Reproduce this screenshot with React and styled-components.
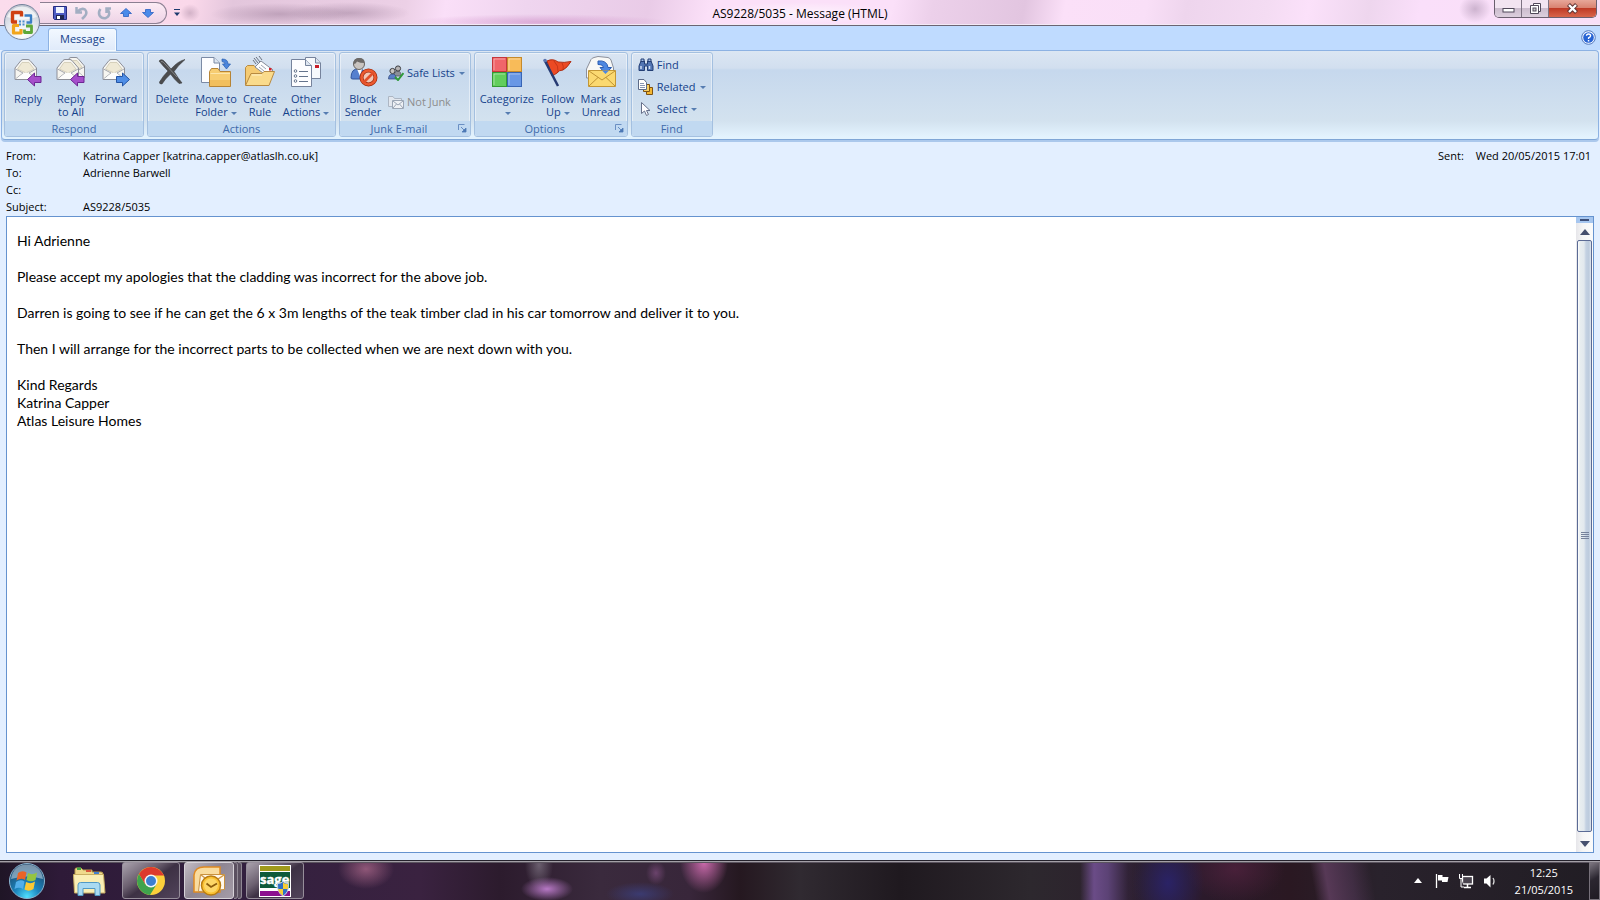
import React from 'react'
import styled, { createGlobalStyle, css } from 'styled-components'

const UI_FONT = `'Open Sans', 'Noto Sans', sans-serif`

const GlobalStyle = createGlobalStyle`
  * {
    box-sizing: border-box;
  }

  body {
    margin: 0;
    overflow: hidden;
    font-family: ${UI_FONT};
    font-size: 11px;
    color: #000;
  }

  button {
    font: inherit;
    color: inherit;
    background: none;
    border: 0;
    padding: 0;
    cursor: pointer;
  }

  svg {
    display: block;
    flex: none;
  }
`

const Desktop = styled.div`
  display: flex;
  flex-direction: column;
  height: 100vh;
  background: #e3efff;
`

/* ---------- title bar ---------- */

const TitleBar = styled.header`
  position: relative;
  display: grid;
  grid-template-columns: 1fr auto 1fr;
  align-items: center;
  height: 26px;
  border-bottom: 1px solid #6b6472;
  box-shadow: inset 0 -1px 0 #f3e9f6;
  background:
    radial-gradient(ellipse 70px 11px at 280px 14px, rgba(120, 90, 120, 0.35), transparent),
    radial-gradient(ellipse 60px 11px at 350px 13px, rgba(120, 90, 120, 0.35), transparent),
    radial-gradient(ellipse 10px 9px at 190px 13px, rgba(120, 90, 120, 0.3), transparent),
    radial-gradient(ellipse 130px 8px at 540px 22px, rgba(190, 110, 180, 0.4), transparent),
    radial-gradient(ellipse 16px 14px at 1475px 9px, rgba(150, 125, 155, 0.45), transparent),
    linear-gradient(100deg, #fbdcec 0, #fad8ea 190px, #e3c6dc 230px, #ecd0e6 400px,
      #fadff8 440px, #efd5ef 520px, #e9cbe7 640px, #fbe0f8 700px, #fbe0f9 880px,
      #ecd0ea 920px, #e2c5e0 1010px, #fbe0f8 1050px, #f9dff7 1130px,
      #eed5ed 1170px, #f4dcf3 1250px, #fbe1fa 1290px, #eed6ee 1350px, #fadffa 1400px, #f8dff7 100%);
`

const QuickAccess = styled.div`
  display: flex;
  align-items: center;
  height: 22px;
  margin: 0 0 0 40px;
`

const QuickPill = styled.div`
  display: flex;
  align-items: center;
  gap: 6px;
  height: 22px;
  padding: 0 10px 0 12px;
  border: 1px solid #8b7f92;
  border-left: 0;
  border-radius: 0 11px 11px 0;
  background: linear-gradient(rgba(255, 255, 255, 0.5), rgba(225, 205, 225, 0.5));
`

const QuickMore = styled.button`
  margin-left: 6px;
`

const OfficeButton = styled.button`
  position: absolute;
  left: 3px;
  top: 2px;
  z-index: 2;
`

const WindowTitle = styled.h1`
  margin: 0;
  padding: 2px 8px 0;
  font-size: 12px;
  font-weight: 400;
  line-height: 20px;
  background: radial-gradient(ellipse closest-side, rgba(255, 255, 255, 0.6), transparent);
`

const WindowButtons = styled.div`
  justify-self: end;
  align-self: start;
  display: flex;
  margin-right: 3px;
  border: 1px solid #6a5f6e;
  border-top: 0;
  border-radius: 0 0 5px 5px;
  overflow: hidden;
`

const WindowButton = styled.button`
  display: grid;
  place-items: center;
  width: ${({ $close }) => ($close ? 47 : 27)}px;
  height: 17px;
  border-right: 1px solid #7d7282;
  background: linear-gradient(#f2e4f1 0 45%, #cbbccd 50%, #dccfdd);

  ${({ $close }) =>
    $close &&
    css`
      border-right: 0;
      background: linear-gradient(#e7a799 0, #d98371 45%, #bf3b26 50%, #d8654b);
    `}
`

/* ---------- ribbon ---------- */

const TabStrip = styled.nav`
  display: flex;
  justify-content: space-between;
  align-items: flex-end;
  height: 24px;
  padding: 0 4px 0 48px;
  background: #bfdbff;
`

const Tab = styled.button`
  height: 23px;
  padding: 0 11px 3px;
  position: relative;
  z-index: 1;
  margin-bottom: -1px;
  border: 1px solid #8db2e3;
  border-bottom: 0;
  border-radius: 3px 3px 0 0;
  background: linear-gradient(#f2f8ff, #dfeafa);
  box-shadow: inset 0 0 0 1px #f4fbff;
  color: #15428b;
`

const HelpButton = styled.button`
  align-self: center;
  padding-bottom: 2px;
`

const Ribbon = styled.section`
  display: flex;
  gap: 3px;
  height: 90px;
  margin: 0 1px;
  padding: 1px 2px 2px;
  border: 1px solid #8db2e3;
  border-bottom-color: #7fa6d6;
  border-radius: 4px;
  box-shadow: 0 2px 0 #abc8ec;
  background: linear-gradient(#dbe6f3 0, #d2dfef 17px, #c6d8ed 19px, #d3e2ef 70px, #e3f3fe 86px);
`

const Group = styled.div`
  display: flex;
  flex-direction: column;
  border: 1px solid #a4c0e0;
  border-radius: 3px;
  box-shadow: inset 0 0 0 1px rgba(255, 255, 255, 0.45);
  overflow: hidden;
`

const GroupItems = styled.div`
  flex: 1;
  display: flex;
  align-items: stretch;
  padding: 0 ${({ $end }) => $end}px 0 2px;
`

const GroupName = styled.div`
  display: flex;
  align-items: center;
  height: 15px;
  padding-right: ${({ $launcher }) => ($launcher ? 3 : 0)}px;
  background: #c1d9f1;
  color: #3e6aaa;
  line-height: 15px;
  text-align: center;

  span {
    flex: 1;
  }
`

const BigButton = styled.button`
  display: flex;
  flex-direction: column;
  align-items: center;
  min-width: ${({ $width }) => $width}px;
  padding-top: 3px;
  color: #15428b;
  line-height: 13px;
  text-align: center;
  white-space: nowrap;

  > svg {
    margin-bottom: 4px;
  }
`

const SmallButtons = styled.div`
  display: flex;
  flex-direction: column;
  gap: ${({ $gap }) => $gap}px;
  padding: ${({ $top }) => $top}px 2px 0 4px;
`

const SmallButton = styled.button`
  display: flex;
  align-items: center;
  gap: 3px;
  height: 16px;
  color: #15428b;
  line-height: 16px;
  white-space: nowrap;

  &:disabled {
    color: #8d8d8d;
  }

  i {
    margin-left: 1px;
  }
`

const Caret = styled.i`
  display: inline-block;
  margin-left: 3px;
  vertical-align: middle;
  border: 3px solid transparent;
  border-top-color: #567db1;
  border-bottom: 0;
`

/* ---------- message ---------- */

const Message = styled.main`
  flex: 1;
  min-height: 0;
  display: flex;
  flex-direction: column;
  padding: 7px 6px;
`

const MessageHead = styled.div`
  display: flex;
  justify-content: space-between;
  padding: 0 3px 1px 0;
`

const Fields = styled.dl`
  display: grid;
  grid-template-columns: 77px auto;
  grid-auto-rows: 17px;
  margin: 0;
  line-height: 17px;

  dd {
    margin: 0;
  }
`

const Sent = styled(Fields)`
  grid-template-columns: auto auto;
  column-gap: 12px;
`

const Sheet = styled.div`
  flex: 1;
  min-height: 0;
  display: flex;
  border: 1px solid #6593cf;
  background: #fff;
`

const MessageText = styled.article`
  flex: 1;
  padding: 15px 10px;
  font-family: Lato, 'Open Sans', sans-serif;
  font-size: 14px;
  font-variant-ligatures: none;
  line-height: 18px;

  p {
    margin: 0 0 18px;
  }
`

const Scrollbar = styled.div`
  display: flex;
  flex-direction: column;
  width: 17px;
  background: linear-gradient(90deg, #e6e6ea, #f6f6f6 40%, #fbfbfb);
`

const SplitHandle = styled.div`
  height: 6px;
  padding: 2px 4px;
  background: #a6c6ef;

  &::before {
    content: '';
    display: block;
    height: 2px;
    background: #3d4f78;
  }
`

const ScrollArrow = styled.button`
  display: grid;
  place-items: center;
  height: ${({ $down }) => ($down ? 20 : 17)}px;
  padding-top: ${({ $down }) => ($down ? 3 : 0)}px;
`

const Thumb = styled.div`
  flex: 1;
  display: grid;
  place-items: center;
  margin: 0 1px;
  border: 1px solid #5b6b95;
  border-radius: 2px;
  background: linear-gradient(90deg, #fff 0, #e8eef0 2px, #e2e9ee 6px, #c3d1e2 8px, #bccbdd 11px, #dfe8f2);
`

/* ---------- taskbar ---------- */

const Taskbar = styled.footer`
  display: flex;
  height: 40px;
  border-top: 1px solid #25222c;
  box-shadow: inset 0 1px 0 #a39fa6, inset 0 2px 0 #5a535e;
  color: #fff;
  background:
    radial-gradient(ellipse 28px 20px at 366px 8px, rgba(190, 115, 150, 0.65), transparent),
    radial-gradient(ellipse 26px 12px at 547px 28px, rgba(190, 125, 205, 0.95), transparent),
    radial-gradient(ellipse 14px 24px at 539px 4px, rgba(130, 120, 135, 0.7), transparent),
    radial-gradient(ellipse 10px 12px at 656px 12px, rgba(140, 85, 140, 0.6), transparent),
    radial-gradient(ellipse 34px 12px at 640px 33px, rgba(60, 65, 130, 0.75), transparent),
    radial-gradient(ellipse 24px 30px at 704px 2px, rgba(200, 105, 170, 1), transparent),
    linear-gradient(90deg, transparent 1080px, rgba(110, 78, 140, 0.95) 1094px,
      rgba(100, 72, 130, 0.85) 1108px, rgba(60, 40, 80, 0.3) 1128px, transparent 1140px),
    radial-gradient(ellipse 36px 50px at 1168px 22px, rgba(42, 35, 105, 0.95), transparent),
    radial-gradient(ellipse 50px 34px at 1235px 8px, rgba(85, 35, 65, 0.7), transparent),
    linear-gradient(80deg, transparent 1296px, rgba(95, 62, 95, 0.85) 1310px,
      rgba(80, 55, 85, 0.6) 1335px, transparent 1355px),
    linear-gradient(90deg, #1f1526 0, #2e1a38 60px, #33203f 240px, #3a2240 420px, #2c1b2d 500px,
      #3a2a3d 600px, #38263a 690px, #251820 740px, #302a31 800px, #1f191f 900px,
      #2d282e 1030px, #2b1a2b 1200px, #2a1822 1290px, #29222c 1380px, #211d24 100%);
`

const TaskButtons = styled.div`
  display: flex;
  flex: 1;
  align-items: stretch;
  padding-left: 8px;
`

const StartButton = styled.button`
  width: 38px;
  align-self: center;
`

const PinButton = styled.button`
  display: grid;
  place-items: center;
  width: 60px;
  margin: 1px 3px 0 13px;
`

const AppButton = styled.button`
  display: grid;
  place-items: center;
  width: ${({ $active }) => ($active ? 50 : 58)}px;
  margin: 1px ${({ $active }) => ($active ? 0 : 4)}px 1px 0;
  border: 1px solid ${({ $active }) => ($active ? '#d6d2d8' : '#968e9a')};
  border-radius: 3px;
  background: ${({ $active }) =>
    $active
      ? 'linear-gradient(135deg, #c3bcc4, #8e8592 45%, #a59ca8)'
      : 'linear-gradient(145deg, #aaa2ad 0, #6c6070 35%, #3d3144 52%, #51435a)'};
`

const StackEdge = styled.span`
  width: 4px;
  margin: 1px 0;
  border: 1px solid #8f8793;
  border-left: 0;
  border-radius: 0 3px 3px 0;
  background: #5b5060;

  & + button {
    margin-left: 4px;
  }
`

const Tray = styled.div`
  display: flex;
  align-items: center;
`

const TrayIcons = styled.div`
  display: flex;
  align-items: center;
  gap: 8px;
  margin-right: 17px;
`

const HiddenIconsButton = styled.button`
  padding-right: 4px;
`

const Clock = styled.time`
  display: block;
  margin-right: 16px;
  line-height: 17px;
  text-align: center;
`

const ShowDesktop = styled.button`
  align-self: stretch;
  width: 11px;
  margin-top: 1px;
  border: 1px solid #77717a;
  background: linear-gradient(150deg, #7c7680, #2b2630 45%, #1f1b23);
`

/* ---------- drawings ---------- */

const EnvelopeShape = () => (
  <>
    <path d="M2 12 8 4.500Q9 3.500 10 3.500H15Q16 3.500 17 4.500L23.500 12V23.500H2Z" fill="#f6f5f0" stroke="#8d8f98" />
    <path d="M4.500 13 9 6.500H16L21 13 13 17Z" fill="#efe9d5" stroke="#d6d0bb" />
    <path d="M2.500 13 10 17M23 13 16 17M2.500 23 10 17M23 23 16 17" fill="none" stroke="#a7a9ae" />
    <path d="M3 23 10 17.500 13 16.500 16 17.500 22.500 23Z" fill="#fdfdfc" />
  </>
)

const LeftArrow = () => (
  <path d="M14.500 23.500 21.500 17V20.500H28V26.500H21.500V30Z" fill="#a64fcb" stroke="#6d2793" />
)

const ReplyIcon = () => (
  <svg width="30" height="32" viewBox="0 0 30 32">
    <EnvelopeShape />
    <LeftArrow />
  </svg>
)

const ReplyAllIcon = () => (
  <svg width="30" height="32" viewBox="0 0 30 32">
    <g transform="translate(5 -2)">
      <EnvelopeShape />
    </g>
    <g transform="translate(-1 0)">
      <EnvelopeShape />
    </g>
    <LeftArrow />
  </svg>
)

const ForwardIcon = () => (
  <svg width="30" height="32" viewBox="0 0 30 32">
    <EnvelopeShape />
    <path d="M28.500 23.500 21.500 17V20.500H15.500V26.500H21.500V30Z" fill="#4f8ee6" stroke="#2354a5" />
  </svg>
)

const DeleteIcon = () => (
  <svg width="32" height="32" viewBox="0 0 32 32">
    <path d="M3 5Q6 2 9 6L15 13Q22 5 29 3.500Q22 9.500 18 15.500Q22 22 26 27L23 27.500Q18 23 14.500 18Q9 23 6 28Q3 28 3.500 26Q7 20 12 15Q7 10 3 5Z" fill="#4b4c4e" stroke="#3b3c3e" strokeWidth=".6" />
    <path d="M5 5.500Q7 5 9 8L15 14.500 21 21" stroke="#858789" fill="none" />
  </svg>
)

const MoveIcon = () => (
  <svg width="32" height="32" viewBox="0 0 32 32">
    <path d="M1.500 1.500H14L19.500 7V26.500H1.500Z" fill="#fdfdff" stroke="#7b8aa5" />
    <path d="M14 1.500V7H19.500" fill="#dde5f0" stroke="#7b8aa5" />
    <path d="M22 3Q28 3 28 8H30.500L26.500 13 22.500 8H25Q25 6 22 5.500Z" fill="#4c86dc" stroke="#275cae" strokeWidth=".7" />
    <path d="M9.500 30.500V15.500L11.500 12.500H18L20 15.500H30.500V30.500Z" fill="#f7cd72" stroke="#b68436" />
    <path d="M10.500 17.500H30" stroke="#fde6ab" />
    <path d="M10 30V24H30V30Z" fill="#eeb650" opacity=".6" />
  </svg>
)

const RuleIcon = () => (
  <svg width="32" height="32" viewBox="0 0 32 32">
    <path d="M1.500 29V11.500L3.500 9.500H10L12 11.500H24.500V18" fill="#f5cb73" stroke="#b88a40" />
    <path d="M17 5 29 14 23 20 11 11Z" fill="#fdfdfd" stroke="#858b98" />
    <path d="M9 4 12 8M12 1 16 6M15 0 18 4M10 2 14 7" stroke="#6b7280" />
    <path d="M17 9 22 13M15 11 20 15" stroke="#9aa3b4" />
    <rect x="25" y="12" width="2.500" height="2.500" fill="#d4202a" />
    <path d="M1.500 29.500 7 17.500H18L20 15.500H30.500L25 29.500Z" fill="#fadb8c" stroke="#b88a40" />
    <path d="M8 19H18" stroke="#fff1c8" />
  </svg>
)

const OtherIcon = () => (
  <svg width="32" height="32" viewBox="0 0 32 32">
    <path d="M15.500 1.500H25.500L30.500 7V22.500H15.500Z" fill="#f7f9fc" stroke="#76839c" />
    <path d="M25.500 1.500V7H30.500" fill="#dce3ee" stroke="#76839c" />
    <rect x="25" y="9" width="4" height="3" fill="#c81e28" />
    <path d="M1.500 3.500H15.500L21.500 9.500V30.500H1.500Z" fill="#fdfdff" stroke="#76839c" />
    <path d="M15.500 3.500V9.500H21.500" fill="#dde5f0" stroke="#76839c" />
    <g fill="#fff" stroke="#65748d">
      <circle cx="5.500" cy="15" r="1.300" />
      <circle cx="5.500" cy="20" r="1.300" />
      <circle cx="5.500" cy="25" r="1.300" />
      <path d="M9 15.500H18M9 20.500H18M9 25.500H18" />
    </g>
  </svg>
)

const BlockIcon = () => (
  <svg width="30" height="32" viewBox="0 0 30 32">
    <path d="M3 22Q3 12 11 13Q17 13 18 20V23H5Q3 23 3 22Z" fill="#5680cf" stroke="#31549b" />
    <path d="M9 13 12 20 14 13Z" fill="#fff" />
    <circle cx="11" cy="8" r="5.500" fill="#c9c4c0" stroke="#66625f" />
    <path d="M5.500 8Q5 2 11 2Q17 2 16.500 7Q12 7 9 5.500Q8 8 5.500 8Z" fill="#6d6a68" />
    <circle cx="20.500" cy="21.500" r="7" fill="#f2c6b5" stroke="#9e2a0c" strokeWidth="4" />
    <circle cx="20.500" cy="21.500" r="7" fill="none" stroke="#ec5a30" strokeWidth="2.600" />
    <path d="M15.500 26.500 25.500 16.500" stroke="#e2502a" strokeWidth="2.600" />
  </svg>
)

const SafeIcon = () => (
  <svg width="16" height="16" viewBox="0 0 16 16">
    <path d="M6 11Q6 6 10 6Q13 6 13 11Z" fill="#8c9099" stroke="#4c4f58" strokeWidth=".7" />
    <circle cx="10" cy="3.500" r="2.600" fill="#b5b3b4" stroke="#3e3f43" />
    <path d="M.5 14Q.5 9 5 9Q8 9 8 14Z" fill="#5a7fc8" stroke="#30477a" strokeWidth=".7" />
    <circle cx="4.500" cy="6" r="2.600" fill="#c8c4c2" stroke="#3e3f43" />
    <path d="M7 12 10 15 15.500 8" fill="none" stroke="#2f9a3a" strokeWidth="2" />
  </svg>
)

const NotJunkIcon = () => (
  <svg width="16" height="16" viewBox="0 0 16 16">
    <path d="M.5 12.500V2.500H5L6.500 4.500H13.500V12.500Z" fill="#e2e7ee" stroke="#adb6c3" />
    <path d="M4.500 6.500H15.500V14.500H4.500Z" fill="#eef1f5" stroke="#9ba6b5" />
    <path d="M5 7 10 11 15 7M5 14 8.500 10M15 14 11.500 10" fill="none" stroke="#9ba6b5" />
  </svg>
)

const CategorizeIcon = () => (
  <svg width="32" height="32" viewBox="0 0 32 32">
    <rect x="1.500" y="1.500" width="14" height="14" fill="#f0656a" stroke="#c4373b" />
    <rect x="16.500" y="1.500" width="14" height="14" fill="#f8bb59" stroke="#c58a2c" />
    <rect x="1.500" y="16.500" width="14" height="14" fill="#62ce5c" stroke="#349a34" />
    <rect x="16.500" y="16.500" width="14" height="14" fill="#6897e5" stroke="#3865b5" />
    <path d="M3 14V3H14M18 14V3H29M3 29V18H14M18 29V18H29" fill="none" stroke="#fff" opacity=".4" />
  </svg>
)

const FlagIcon = () => (
  <svg width="32" height="32" viewBox="0 0 32 32">
    <path d="M5 5Q11 2 16 6Q22 7 29 5.500Q25 12 21 14Q17 14 15 17Q12 19 10 20Z" fill="#ec4a24" stroke="#b02c11" />
    <path d="M12 5Q17 10 16 16M20 7Q22 10 21 14" fill="none" stroke="#b62e12" opacity=".7" />
    <path d="M3 5 16 30" stroke="#263a73" strokeWidth="2.500" />
    <circle cx="3" cy="4.500" r="1.800" fill="#5f76b0" />
  </svg>
)

const UnreadIcon = () => (
  <svg width="32" height="32" viewBox="0 0 32 32">
    <path d="M1.500 13 6 3.500Q7 2 9 1.500L13 .5 23 1.500Q25 2 26 4L28.500 12V22H1.500Z" fill="#f8f8f6" stroke="#8b8f9a" />
    <path d="M13 5Q22 4 23 11.500H26.500L20.500 18 15 11.500H18.500Q18 8.500 13 8.500Z" fill="#4e88e2" stroke="#2a5cb2" />
    <path d="M3.500 14.500H30.500V30.500H3.500Z" fill="#fbd970" stroke="#c39736" />
    <path d="M4 15 17 24 30 15M4 30 13 21.500M30 30 21 21.500" fill="none" stroke="#bf9334" />
    <path d="M20.500 18 17 14.500H24Z" fill="#4e88e2" />
  </svg>
)

const BinocularsIcon = () => (
  <svg width="16" height="16" viewBox="0 0 16 16">
    <path d="M3 4 1 9V13.500H6.500V9H9.500V13.500H15V9L13 4H9.500V7H6.500V4Z" fill="#5275b3" stroke="#233e74" />
    <path d="M3 2H6V4.500H3ZM10 2H13V4.500H10Z" fill="#a8c0e8" stroke="#233e74" />
    <path d="M3 9V12M11.500 9V12" stroke="#cfdef5" strokeWidth="1.500" />
  </svg>
)

const RelatedIcon = () => (
  <svg width="16" height="16" viewBox="0 0 16 16">
    <path d="M8.500 8.500H14.500V15.500H8.500Z" fill="#f4b732" stroke="#7d5213" />
    <path d="M5.500 5.500H11.500V12.500H5.500Z" fill="#f8cf63" stroke="#7d5213" />
    <path d="M.5 .5H6L8.500 3.500V10.500H.5Z" fill="#fff" stroke="#5c6b88" />
    <path d="M2 4.500H6M2 6.500H7M2 8.500H7" stroke="#8796b3" />
  </svg>
)

const PointerIcon = () => (
  <svg width="16" height="16" viewBox="0 0 16 16">
    <path d="M3.500 1.500V12.500L6.500 10 8.500 14.500 10.500 13.500 8.500 9.500H12Z" fill="#fdfdff" stroke="#66708a" />
  </svg>
)

const OfficeLogo = () => (
  <svg width="38" height="39" viewBox="0 0 38 39">
    <defs>
      <radialGradient id="orb" cx=".5" cy=".85" r=".9">
        <stop offset="0" stopColor="#fff" />
        <stop offset=".5" stopColor="#e3e7ee" />
        <stop offset="1" stopColor="#b9bfcb" />
      </radialGradient>
    </defs>
    <circle cx="19" cy="20" r="17.500" fill="url(#orb)" stroke="#74829c" />
    <path d="M4 15Q8 5 19 4.500Q30 5 34 15Q19 20 4 15Z" fill="#fff" opacity=".65" />
    <g fill="none" strokeLinejoin="round">
      <path d="M14 20H9.500V10.500H18.500V14.500" stroke="#cf3f12" strokeWidth="3.400" />
      <path d="M16 23.500H10.500V31H18V27" stroke="#f2a51c" strokeWidth="3.200" />
      <path d="M21.500 13.500H28V20.500H23.500" stroke="#3a7ec4" strokeWidth="2.400" />
      <path d="M21.500 27.500V30.500H28.500V24H23" stroke="#5fa83a" strokeWidth="2.800" />
    </g>
    <path d="M16 19.500H22M16 22.500H22" stroke="#4a8bca" strokeWidth="2" strokeDasharray="2 1.500" />
  </svg>
)

const SaveIcon = () => (
  <svg width="16" height="16" viewBox="0 0 16 16">
    <path d="M1.500 1.500H14.500V14.500H2.500L1.500 13.500Z" fill="#4f5cc4" stroke="#252c80" />
    <rect x="4" y="2" width="8" height="6" fill="#f0f4ff" />
    <rect x="4" y="10" width="8" height="4.500" fill="#20264f" />
    <rect x="5" y="11" width="3" height="3" fill="#fff" />
  </svg>
)

const UndoIcon = ({ flip }) => (
  <svg width="16" height="16" viewBox="0 0 16 16" fill="none" stroke="#a3aec2" strokeWidth="2.500">
    {flip ? (
      <path d="M4.500 4Q2 7 3.500 10.500Q6 14 10 13Q14 11 13 7Q12.500 5 11 4M10.500 8V3.500H15" />
    ) : (
      <path d="M2.500 2V7.500H8M3 7Q7 2.500 11 4.500Q14 8 10.500 11.500L8 14" />
    )}
  </svg>
)

const StepIcon = ({ down }) => (
  <svg width="16" height="16" viewBox="0 0 16 16">
    <path
      d={down ? 'M8 12.500 2.500 7.500H5.500V4.500H10.500V7.500H13.500Z' : 'M8 3.500 13.500 8.500H10.500V11.500H5.500V8.500H2.500Z'}
      fill="#4a8bea"
      stroke="#2a5fc2"
      strokeWidth=".8"
      strokeLinejoin="round"
    />
  </svg>
)

const MoreIcon = () => (
  <svg width="8" height="10" viewBox="0 0 8 10">
    <path d="M1 1.500H7" stroke="#1d3a6e" />
    <path d="M1 4.500H7L4 8Z" fill="#1d3a6e" />
  </svg>
)

const HelpIcon = () => (
  <svg width="15" height="15" viewBox="0 0 15 15">
    <circle cx="7.500" cy="7.500" r="6.800" fill="#eef4ff" stroke="#5379bd" />
    <circle cx="7.500" cy="7.500" r="5.300" fill="#2763d4" />
    <path d="M5.500 5.800Q5.500 4 7.500 4Q9.600 4 9.600 5.800Q9.600 7 7.600 7.800V9" fill="none" stroke="#fff" strokeWidth="1.400" />
    <rect x="6.800" y="10" width="1.500" height="1.500" fill="#fff" />
  </svg>
)

const LauncherIcon = () => (
  <svg width="9" height="9" viewBox="0 0 9 9">
    <path d="M.5 6V.5H6.500" fill="none" stroke="#6a8fc3" />
    <path d="M3 3 6 6M8 4V8H4Z" fill="#4d78b5" stroke="#4d78b5" strokeWidth=".8" />
  </svg>
)

const MinimizeIcon = () => (
  <svg width="13" height="11" viewBox="0 0 13 11">
    <rect x="1" y="5.500" width="11" height="3.500" fill="#fff" stroke="#51495a" />
  </svg>
)

const RestoreIcon = () => (
  <svg width="13" height="13" viewBox="0 0 13 13">
    <path d="M4.500 1.500H11.500V9.500H4.500Z" fill="#fff" stroke="#51495a" />
    <path d="M1.500 3.500H9.500V11.500H1.500Z" fill="#fff" stroke="#51495a" />
    <rect x="4" y="6" width="3" height="3" fill="#ccc" stroke="#51495a" />
  </svg>
)

const CloseIcon = () => (
  <svg width="13" height="11" viewBox="0 0 13 11">
    <path d="M2.500 1.500 10.500 9.500M10.500 1.500 2.500 9.500" stroke="#5c3030" strokeWidth="4.200" />
    <path d="M3 2 10 9M10 2 3 9" stroke="#fff" strokeWidth="2.400" />
  </svg>
)

const ArrowGlyph = ({ down }) => (
  <svg width="10" height="6" viewBox="0 0 10 6">
    <path d={down ? 'M0 0H10L5 6Z' : 'M0 6H10L5 0Z'} fill="#46506e" />
  </svg>
)

const Grip = () => (
  <svg width="8" height="8" viewBox="0 0 8 8">
    <path d="M0 .5H8M0 2.500H8M0 4.500H8M0 6.500H8" stroke="#76839c" />
  </svg>
)

const StartOrb = () => (
  <svg width="38" height="38" viewBox="0 0 38 38">
    <defs>
      <radialGradient id="start" cx=".5" cy=".95" r=".9">
        <stop offset="0" stopColor="#4fe0ff" />
        <stop offset=".4" stopColor="#1c84bd" />
        <stop offset="1" stopColor="#1c4266" />
      </radialGradient>
    </defs>
    <circle cx="19" cy="19" r="17.500" fill="url(#start)" stroke="#8cb4cf" />
    <path d="M3 17Q5 3 19 2.500Q33 3 35 17Q19 12 3 17Z" fill="#d6e6f0" opacity=".5" />
    <path d="M10 11Q14 8 18.500 10.500L17 18Q13 15.500 8.500 18.500Z" fill="#ea6427" />
    <path d="M20 11Q24 13.500 29 10.500L27.500 18Q23 20.500 18.500 18Z" fill="#95c440" />
    <path d="M8 20Q12.500 17 16.500 19.500L15 27Q11 24.500 6.500 27Z" fill="#52aeea" />
    <path d="M18 20Q22.500 22.500 27 19.500L25.500 27Q21 30 16.500 27.500Z" fill="#fcc833" />
  </svg>
)

const ExplorerIcon = () => (
  <svg width="34" height="32" viewBox="0 0 34 32">
    <path d="M3 27V4.500Q3 3 4.500 3H9L11 5H20V7H29Q31 7 31 9V27Z" fill="#efd98c" stroke="#b79a4c" />
    <path d="M5 2.500H9V5H5Z" fill="#3fa544" />
    <path d="M14 5H19V7H14Z" fill="#d8563c" />
    <path d="M22 7H27V9H22Z" fill="#4380cf" />
    <path d="M1.500 9.500H31.500L33 28H2.500Z" fill="#faeeb5" stroke="#c9ae62" />
    <path d="M6 30.500V20Q6 17.500 8.500 17.500H25.500Q28 17.500 28 20V30.500H23V23.500H11V30.500Z" fill="#a9daf2" stroke="#5199c4" />
  </svg>
)

const ChromeIcon = () => (
  <svg width="30" height="30" viewBox="0 0 30 30">
    <circle cx="15" cy="15" r="14" fill="#fbd03b" />
    <path d="M2.900 8A14 14 0 0 1 27.100 8L28 9.500H15L9 18Z" fill="#dd3a2d" />
    <path d="M2.900 8A14 14 0 0 0 14 29L20.500 18.500 15 21 9 18Z" fill="#3fa34d" />
    <circle cx="15" cy="15" r="6.500" fill="#f4f6f8" />
    <circle cx="15" cy="15" r="5" fill="#3c7fd0" />
  </svg>
)

const OutlookIcon = () => (
  <svg width="34" height="32" viewBox="0 0 34 32">
    <path d="M2 27V10Q3 2 12 2H28V27Z" fill="#f9dc9f" stroke="#e08a22" strokeWidth="1.500" />
    <path d="M8.500 9.500H32.500V24.500L6.500 26.500Z" fill="#fff8ec" stroke="#c99240" />
    <path d="M9 10 20 18 32 10" fill="none" stroke="#d29a46" strokeWidth="1.500" />
    <circle cx="19" cy="20.500" r="9.500" fill="#fbc234" stroke="#b97c12" strokeWidth="1.500" />
    <circle cx="19" cy="20.500" r="7" fill="#fdd768" />
    <path d="M14.500 18.500 19 22 25 18.500" fill="none" stroke="#8c5c0c" strokeWidth="1.800" />
  </svg>
)

const SageIcon = () => (
  <svg width="32" height="32" viewBox="0 0 32 32">
    <rect width="32" height="32" fill="#fff" />
    <rect x="1" y="1" width="30" height="5" fill="#a09a1a" />
    <rect x="1" y="7" width="30" height="16" fill="#0d5a3a" />
    <rect x="1" y="26" width="30" height="5" fill="#8c108f" />
    <text x="1" y="19" fill="#fff" stroke="#fff" strokeWidth=".4" fontFamily="Open Sans" fontSize="13" fontWeight="700">
      sage
    </text>
    <path d="M18.500 18.500Q22 18.500 24 16.500Q26 18.500 29.500 18.500Q30 28 24 31Q18 28 18.500 18.500Z" fill="#2f6fc6" stroke="#c7d5e8" />
    <path d="M24 17.500Q26 19 29 19.200V24H24ZM19 24H24V30.500Q20 28 19 24Z" fill="#f8cd36" />
  </svg>
)

const TrayArrow = () => (
  <svg width="8" height="5" viewBox="0 0 8 5">
    <path d="M0 5H8L4 0Z" fill="#fff" />
  </svg>
)

const TrayFlag = () => (
  <svg width="16" height="16" viewBox="0 0 16 16">
    <path d="M2.500 1V15" stroke="#fff" strokeWidth="1.300" />
    <path d="M4 2H8.500V4H14.500L13.500 9H8V7.500H4Z" fill="#fff" />
  </svg>
)

const TrayNetwork = () => (
  <svg width="16" height="16" viewBox="0 0 16 16" fill="none" stroke="#fff">
    <rect x="4.500" y="3.500" width="10" height="7.500" fill="#48424d" strokeWidth="1.300" />
    <path d="M6 14.500H13M9.500 11V14.500" strokeWidth="1.500" />
    <path d="M1.500 1V5.500H4.500V1M3 5V14H6" fill="#332d38" />
  </svg>
)

const TraySound = () => (
  <svg width="16" height="16" viewBox="0 0 16 16">
    <path d="M2 5.500H4.500L8.500 2V14.500L4.500 10.500H2Z" fill="#fff" />
    <path d="M11 5Q13 8 11 11.500" fill="none" stroke="#ddd" strokeWidth="1.300" />
  </svg>
)

function RibbonButton({ icon: Icon, lines, width, menu }) {
  return (
    <BigButton type="button" $width={width}>
      <Icon />
      {lines.map((line, index) => (
        <span key={index}>
          {line}
          {menu && index === lines.length - 1 && <Caret />}
        </span>
      ))}
    </BigButton>
  )
}

function RibbonGroup({ name, launcher, end, children }) {
  return (
    <Group>
      <GroupItems $end={end}>{children}</GroupItems>
      <GroupName $launcher={launcher}>
        <span>{name}</span>
        {launcher && (
          <button type="button" aria-label={`${name} options`}>
            <LauncherIcon />
          </button>
        )}
      </GroupName>
    </Group>
  )
}

function App() {
  return (
    <Desktop>
      <GlobalStyle />

      <TitleBar>
        <OfficeButton type="button" aria-label="Office">
          <OfficeLogo />
        </OfficeButton>
        <QuickAccess>
          <QuickPill>
            <button type="button" aria-label="Save"><SaveIcon /></button>
            <button type="button" aria-label="Undo"><UndoIcon /></button>
            <button type="button" aria-label="Redo"><UndoIcon flip /></button>
            <button type="button" aria-label="Previous item"><StepIcon /></button>
            <button type="button" aria-label="Next item"><StepIcon down /></button>
          </QuickPill>
          <QuickMore type="button" aria-label="Customize"><MoreIcon /></QuickMore>
        </QuickAccess>
        <WindowTitle>AS9228/5035 - Message (HTML)</WindowTitle>
        <WindowButtons>
          <WindowButton type="button" aria-label="Minimize"><MinimizeIcon /></WindowButton>
          <WindowButton type="button" aria-label="Restore"><RestoreIcon /></WindowButton>
          <WindowButton type="button" aria-label="Close" $close><CloseIcon /></WindowButton>
        </WindowButtons>
      </TitleBar>

      <TabStrip>
        <Tab type="button">Message</Tab>
        <HelpButton type="button" aria-label="Help"><HelpIcon /></HelpButton>
      </TabStrip>

      <Ribbon>
        <RibbonGroup name="Respond" end={4}>
          <RibbonButton icon={ReplyIcon} lines={['Reply']} width={42} />
          <RibbonButton icon={ReplyAllIcon} lines={['Reply', 'to All']} width={44} />
          <RibbonButton icon={ForwardIcon} lines={['Forward']} width={46} />
        </RibbonGroup>

        <RibbonGroup name="Actions" end={5}>
          <RibbonButton icon={DeleteIcon} lines={['Delete']} width={44} />
          <RibbonButton icon={MoveIcon} lines={['Move to', 'Folder']} width={44} menu />
          <RibbonButton icon={RuleIcon} lines={['Create', 'Rule']} width={44} />
          <RibbonButton icon={OtherIcon} lines={['Other', 'Actions']} width={48} menu />
        </RibbonGroup>

        <RibbonGroup name="Junk E-mail" launcher end={3}>
          <RibbonButton icon={BlockIcon} lines={['Block', 'Sender']} width={42} />
          <SmallButtons $top={12} $gap={13}>
            <SmallButton type="button"><SafeIcon />Safe Lists<Caret /></SmallButton>
            <SmallButton type="button" disabled><NotJunkIcon />Not Junk</SmallButton>
          </SmallButtons>
        </RibbonGroup>

        <RibbonGroup name="Options" launcher end={4}>
          <RibbonButton icon={CategorizeIcon} lines={['Categorize', '']} width={60} menu />
          <RibbonButton icon={FlagIcon} lines={['Follow', 'Up']} width={42} menu />
          <RibbonButton icon={UnreadIcon} lines={['Mark as', 'Unread']} width={44} />
        </RibbonGroup>

        <RibbonGroup name="Find" end={4}>
          <SmallButtons $top={4} $gap={6}>
            <SmallButton type="button"><BinocularsIcon />Find</SmallButton>
            <SmallButton type="button"><RelatedIcon />Related<Caret /></SmallButton>
            <SmallButton type="button"><PointerIcon />Select<Caret /></SmallButton>
          </SmallButtons>
        </RibbonGroup>
      </Ribbon>

      <Message>
        <MessageHead>
          <Fields>
            <dt>From:</dt>
            <dd>Katrina Capper [katrina.capper@atlaslh.co.uk]</dd>
            <dt>To:</dt>
            <dd>Adrienne Barwell</dd>
            <dt>Cc:</dt>
            <dd />
            <dt>Subject:</dt>
            <dd>AS9228/5035</dd>
          </Fields>
          <Sent>
            <dt>Sent:</dt>
            <dd>Wed 20/05/2015 17:01</dd>
          </Sent>
        </MessageHead>

        <Sheet>
          <MessageText>
            <p>Hi Adrienne</p>
            <p>Please accept my apologies that the cladding was incorrect for the above job.</p>
            <p>Darren is going to see if he can get the 6 x 3m lengths of the teak timber clad in his car tomorrow and deliver it to you.</p>
            <p>Then I will arrange for the incorrect parts to be collected when we are next down with you.</p>
            <p>
              Kind Regards<br />
              Katrina Capper<br />
              Atlas Leisure Homes
            </p>
          </MessageText>
          <Scrollbar>
            <SplitHandle />
            <ScrollArrow type="button" aria-label="Scroll up"><ArrowGlyph /></ScrollArrow>
            <Thumb><Grip /></Thumb>
            <ScrollArrow type="button" aria-label="Scroll down" $down><ArrowGlyph down /></ScrollArrow>
          </Scrollbar>
        </Sheet>
      </Message>

      <Taskbar>
        <TaskButtons>
          <StartButton type="button" aria-label="Start"><StartOrb /></StartButton>
          <PinButton type="button" aria-label="Explorer"><ExplorerIcon /></PinButton>
          <AppButton type="button" aria-label="Chrome"><ChromeIcon /></AppButton>
          <AppButton type="button" aria-label="Outlook" $active><OutlookIcon /></AppButton>
          <StackEdge />
          <StackEdge />
          <AppButton type="button" aria-label="Sage"><SageIcon /></AppButton>
        </TaskButtons>
        <Tray>
          <TrayIcons>
            <HiddenIconsButton type="button" aria-label="Show hidden icons"><TrayArrow /></HiddenIconsButton>
            <TrayFlag />
            <TrayNetwork />
            <TraySound />
          </TrayIcons>
          <Clock>
            12:25<br />
            21/05/2015
          </Clock>
          <ShowDesktop type="button" aria-label="Show desktop" />
        </Tray>
      </Taskbar>
    </Desktop>
  )
}

export default App
